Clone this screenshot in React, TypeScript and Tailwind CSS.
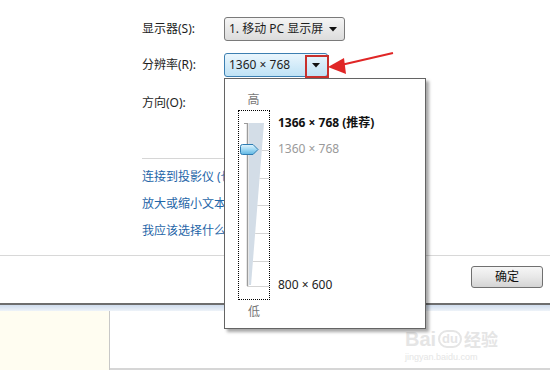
import React from 'react';

const FONT = 'font-["Noto_Sans","Noto_Sans_CJK_SC",sans-serif]';

const TICKS = [39, 67, 94, 122, 150];

function Slider() {
    return (
        <svg width="30" height="188" viewBox="0 0 30 188" className="block">
            <defs>
                <linearGradient id="thumb" x1="0" y1="0" x2="0" y2="1">
                    <stop offset="0" stopColor="#e4f5fd" />
                    <stop offset="0.5" stopColor="#9fd8f3" />
                    <stop offset="1" stopColor="#5fb6e2" />
                </linearGradient>
            </defs>
            {/* wedge */}
            <polygon points="10,12 25,12 12,174 10,174" fill="#d3dde7" />
            {/* ticks */}
            {TICKS.map((y) => (
                <line key={y} x1={25 - ((y - 12) / 162) * 13} y1={y + 0.5} x2="30" y2={y + 0.5} stroke="#d4d4d4" strokeWidth="1" />
            ))}
            <line x1="8" y1="175.5" x2="30" y2="175.5" stroke="#d4d4d4" strokeWidth="1" />
            {/* track */}
            <line x1="8.5" y1="12" x2="8.5" y2="175" stroke="#9c9c9c" strokeWidth="1.5" />
            <line x1="5" y1="12.5" x2="9" y2="12.5" stroke="#9c9c9c" strokeWidth="1" />
            {/* thumb */}
            <path
                d="M3.5,33.5 H14 L19,38.5 L14,43.5 H3.5 Q1.5,43.5 1.5,41.5 V35.5 Q1.5,33.5 3.5,33.5 Z"
                fill="url(#thumb)"
                stroke="#2d7cb2"
                strokeWidth="1"
            />
        </svg>
    );
}

function ResolutionPopup() {
    return (
        <div className="absolute left-[224px] top-[78px] w-[202px] h-[251px] bg-white border border-[#646464] shadow-[3px_3px_3px_rgba(0,0,0,0.35)] flex z-10">
            <div className="flex flex-col items-center pl-[13px] w-[45px] shrink-0">
                <div className="h-[31px] leading-[42px] text-[12px] text-[#777] -ml-[1px]">高</div>
                <div className="w-[32px] h-[190px] border border-dotted border-black">
                    <Slider />
                </div>
                <div className="leading-[24px] text-[12px] text-[#777]">低</div>
            </div>
            <div className="flex flex-col pl-[8px] pt-[36px] text-[12px] leading-[16px]">
                <div className="font-bold text-[#111]">1366 × 768 (推荐)</div>
                <div className="mt-[10px] text-[#9a9a9a]">1360 × 768</div>
                <div className="mt-[120px] text-[#222]">800 × 600</div>
            </div>
        </div>
    );
}

function Caret() {
    return (
        <svg width="8" height="5" viewBox="0 0 8 5" className="block">
            <polygon points="0,0 8,0 4,4.5" fill="#111" />
        </svg>
    );
}

function RedArrow() {
    return (
        <svg width="80" height="40" viewBox="0 0 80 40" className="absolute left-[325px] top-[45px] z-20 pointer-events-none">
            <line x1="68" y1="8" x2="16" y2="20" stroke="#e02626" strokeWidth="2" />
            <polygon points="3,22 19,13 21,29" fill="#e02626" />
        </svg>
    );
}

export default function App() {
    return (
        <div className={`relative w-[550px] h-[370px] overflow-hidden bg-white ${FONT} text-[12px] text-[#1e1e1e]`}>
            <div className="flex flex-col h-[305px] border-b-2 border-[#6e6e6e]">
                {/* form area */}
                <div className="h-[256px] border-b border-[#d8d8d8] pl-[142px] pt-[17px]">
                    <div className="flex items-center h-[24px]">
                        <span className="w-[82px]">显示器(S):</span>
                        <div className="flex items-center h-[24px] w-[121px] pl-[4px] pr-[7px] rounded-[3px] border border-[#7a7a7a] bg-gradient-to-b from-[#f5f5f5] to-[#dcdcdc]">
                            <span className="flex-1">1. 移动 PC 显示屏</span>
                            <Caret />
                        </div>
                    </div>
                    <div className="flex items-center h-[24px] mt-[12px]">
                        <span className="w-[82px]">分辨率(R):</span>
                        <div className="flex items-center h-[24px] w-[104px] pl-[4px] rounded-[3px] border border-[#3c7fb1] bg-gradient-to-b from-[#eaf6fd] to-[#bfe2f5]">
                            <span className="flex-1">1360 × 768</span>
                            <div className="w-[22px] h-[20px] flex items-center justify-center">
                                <Caret />
                            </div>
                        </div>
                    </div>
                    <div className="flex items-center h-[24px] mt-[14px]">
                        <span className="w-[82px]">方向(O):</span>
                    </div>
                    <div className="mt-[43px] w-[260px] border-t border-[#d6d6d6] pt-[4px] text-[#1f66a8] leading-[27px]">
                        <div className="whitespace-nowrap">连接到投影仪 (也可以按下 Windows 徽标键并点击 P)</div>
                        <div className="whitespace-nowrap">放大或缩小文本和其他项目</div>
                        <div className="whitespace-nowrap">我应该选择什么显示器设置?</div>
                    </div>
                </div>
                {/* button row */}
                <div className="flex-1 flex justify-end items-start pt-[10px] pr-[7px]">
                    <button className="w-[72px] h-[22px] rounded-[3px] border border-[#707070] bg-gradient-to-b from-[#f6f6f6] via-[#e8e8e8] to-[#d4d4d4] text-[12px] text-[#111]">
                        确定
                    </button>
                </div>
            </div>
            {/* blue strip */}
            <div className="h-[6px] bg-gradient-to-b from-[#cfdced] to-[#eef3f9]" />
            {/* lower window */}
            <div className="flex h-[59px]">
                <div className="w-[110px] bg-[#fffdf1] border-r border-[#c8c8c8]" />
                <div className="flex-1 bg-white border-b-2 border-[#d6d6d6] flex justify-end pr-[52px] pt-[18px]">
                    <div className="flex flex-col items-start text-[#e3e3e3] opacity-90">
                        <div className="flex items-center gap-[2px] font-['Liberation_Sans',sans-serif] text-[20px] font-bold leading-[20px]">
                            <span>Bai</span>
                            <span className="rounded-full border-2 border-[#e3e3e3] px-[2px] text-[13px] leading-[14px]">du</span>
                            <span className="text-[17px] font-['Noto_Sans_CJK_SC',sans-serif]">经验</span>
                        </div>
                        <div className="text-[9px] leading-[12px] mt-[2px] font-['Liberation_Sans',sans-serif]">jingyan.baidu.com</div>
                    </div>
                </div>
            </div>

            <ResolutionPopup />
            {/* highlighted arrow button */}
            <div className="absolute left-[305px] top-[55px] w-[24px] h-[23px] border-2 border-[#c8302c] z-20" />
            <RedArrow />
        </div>
    );
}
